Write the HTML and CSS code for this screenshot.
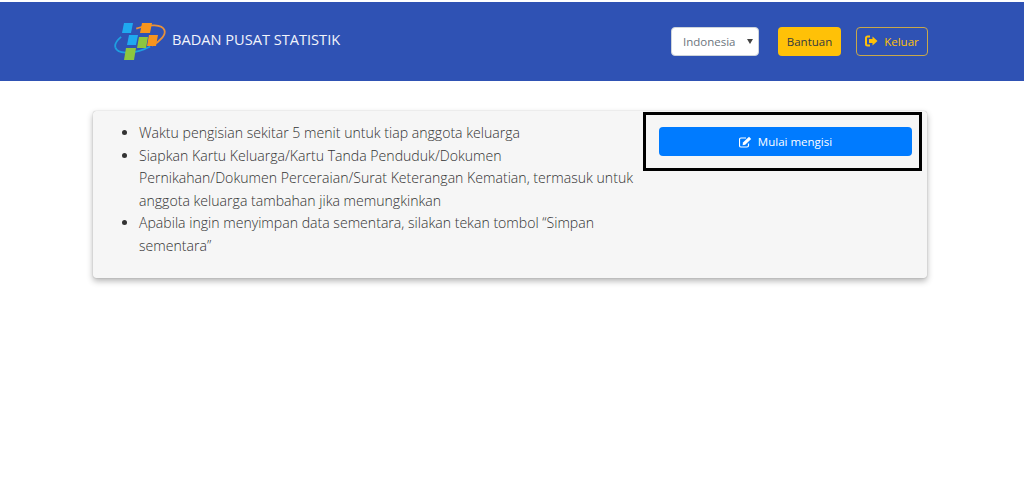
FILE: index.html
```html
<!DOCTYPE html>
<html lang="en">
<head>
    <meta charset="UTF-8">
    <meta name="viewport" content="width=device-width, initial-scale=1.0">
    <title>Badan Pusat Statistik</title>
    <link rel="stylesheet" href="styles.css">
</head>
<body>
    <div class="navbar">
        <div class="brand">
            <svg class="logo" width="54" height="42" viewBox="0 -2 54 42">
                <g transform="rotate(-20 27 19)" fill="none" stroke-width="1.800">
                    <path d="M27 8A26 11 0 0 1 53 19A26 11 0 0 1 36 29.400" stroke="#e8913a"/>
                    <path d="M1 19A26 11 0 0 0 27 30A26 11 0 0 0 34 29.600" stroke="#1e9fe0"/>
                    <path d="M1 19A26 11 0 0 1 10 10.500" stroke="#1e9fe0"/>
                </g>
                <polygon points="11,3 20,3 18,13 9,13" fill="#1fa9f0"/>
                <polygon points="16,15 25,15 23,25 14,25" fill="#1fa9f0"/>
                <polygon points="29,3 39,3 37,13 27,13" fill="#f7941d"/>
                <polygon points="36,15 45,15 43,26 34,26" fill="#f7941d"/>
                <polygon points="26,17 35,17 33,28 24,28" fill="#8dc63f"/>
                <polygon points="13,28 23,28 21,40 11,40" fill="#8dc63f"/>
            </svg>
            <span class="brand-name">BADAN PUSAT STATISTIK</span>
        </div>
        <div class="nav-actions">
            <div class="lang-select">Indonesia<span class="caret"></span></div>
            <a class="btn btn-help">Bantuan</a>
            <a class="btn btn-logout">
                <svg class="icon" width="13" height="12" viewBox="0 0 13 12">
                    <path d="M5 1.500H2.500A1.500 1.500 0 0 0 1 3v6a1.500 1.500 0 0 0 1.500 1.500H5" fill="none" stroke="currentColor" stroke-width="2"/>
                    <path d="M7.500 1.500L12.500 6L7.500 10.500V8H4V4H7.500Z" fill="currentColor"/>
                </svg>
                Keluar
            </a>
        </div>
    </div>

    <div class="content">
        <div class="card">
            <ul class="notes">
                <li>Waktu pengisian sekitar 5 menit untuk tiap anggota keluarga</li>
                <li>Siapkan Kartu Keluarga/Kartu Tanda Penduduk/Dokumen Pernikahan/Dokumen Perceraian/Surat Keterangan Kematian, termasuk untuk anggota keluarga tambahan jika memungkinkan</li>
                <li>Apabila ingin menyimpan data sementara, silakan tekan tombol “Simpan sementara”</li>
            </ul>
            <div class="start-box">
                <a class="btn btn-start">
                    <svg class="icon" width="13" height="12" viewBox="0 0 13 12">
                        <path d="M9.500 7.500V9.500A1.500 1.500 0 0 1 8 11H2A1.500 1.500 0 0 1 .5 9.500V3.500A1.500 1.500 0 0 1 2 2H7" fill="none" stroke="currentColor" stroke-width="1.200"/>
                        <path d="M4 6.500L10 .8L12.200 3L6.200 8.800L3.600 9.200Z" fill="currentColor"/>
                    </svg>
                    Mulai mengisi
                </a>
            </div>
        </div>
    </div>
</body>
</html>
```

FILE: styles.css
```css
body {
    margin: 0;
    padding: 2px 0 0;
    box-sizing: border-box;
    min-height: 100vh;
    font-family: "Open Sans", "Noto Sans", sans-serif;
    background-color: #fff;
    color: #333;
}

.navbar {
    display: flex;
    justify-content: space-between;
    align-items: center;
    height: 79px;
    padding: 0 96px 0 113px;
    background-color: #2f52b4;
}

.brand {
    display: flex;
    align-items: center;
    margin-top: -6px;
}

.logo {
    display: block;
    margin-right: 5px;
}

.brand-name {
    color: #f2f4fb;
    font-size: 14.600px;
}

.nav-actions {
    display: flex;
    align-items: center;
    margin-top: -1px;
}

.lang-select {
    display: flex;
    align-items: center;
    box-sizing: border-box;
    position: relative;
    width: 88px;
    height: 29px;
    padding-left: 11px;
    margin-right: 19px;
    background-color: #fff;
    border: 1px solid #ced4da;
    border-radius: 4px;
    color: #6c757d;
    font-size: 11.500px;
}

.caret {
    position: absolute;
    right: 5px;
    top: 11px;
    border-left: 3px solid transparent;
    border-right: 3px solid transparent;
    border-top: 5px solid #444;
}

.btn {
    display: flex;
    align-items: center;
    justify-content: center;
    box-sizing: border-box;
    border-radius: 4px;
    font-size: 11.500px;
}

.icon {
    margin-right: 6px;
}

.btn-help {
    width: 63px;
    height: 29px;
    margin-right: 15px;
    background-color: #ffc107;
    color: #343a40;
}

.btn-logout {
    width: 72px;
    height: 29px;
    border: 1px solid #c9a84a;
    color: #ffc107;
}

.content {
    padding: 30px 97px 0 93px;
}

.card {
    display: flex;
    box-sizing: border-box;
    height: 167px;
    background-color: #f6f6f6;
    border-radius: 3px;
    box-shadow: 0 0 1px rgba(0, 0, 0, 0.35), 0 3px 6px rgba(0, 0, 0, 0.3);
}

.notes {
    width: 550px;
    margin: 0;
    padding: 11px 8px 0 46px;
    box-sizing: border-box;
    font-size: 14.100px;
    font-weight: 300;
    line-height: 22.500px;
}

.start-box {
    box-sizing: border-box;
    width: 279px;
    height: 59px;
    margin-top: 1px;
    padding: 12px 7px 0 13px;
    border: 3px solid #000;
}

.btn-start {
    height: 29px;
    background-color: #007bff;
    color: #fff;
}
```
